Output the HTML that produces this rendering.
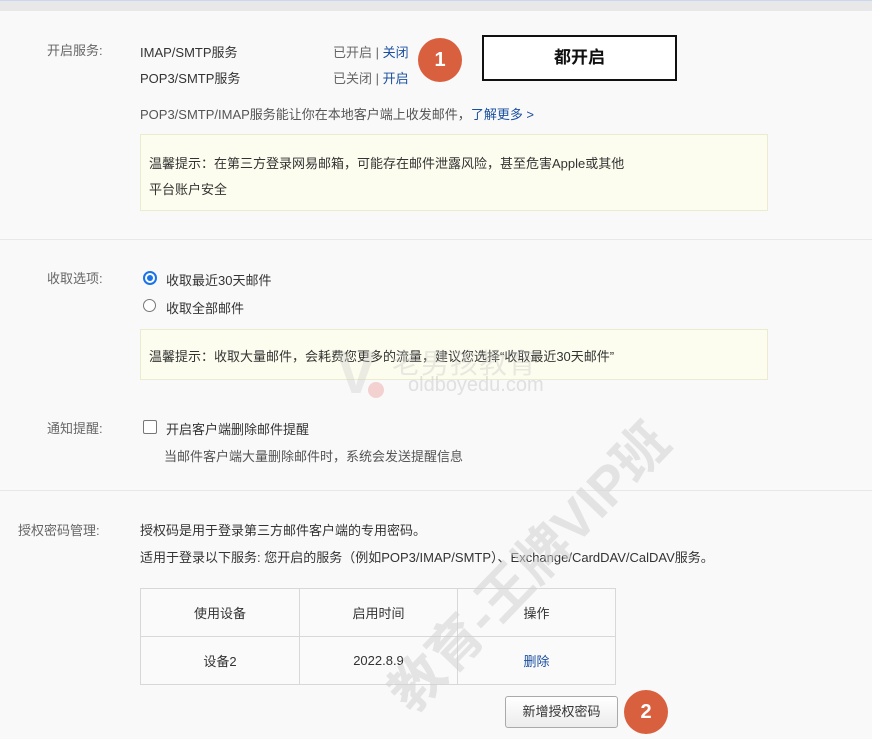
<!DOCTYPE html>
<html style="overflow:hidden;height:739px"><head><meta charset="utf-8"><style>
body{margin:0;width:872px;height:739px;background:#f9f9f9;font-family:"Liberation Sans","Noto Sans CJK SC",sans-serif;font-size:13px;color:#333;position:relative;overflow:hidden}
.a{position:absolute;white-space:nowrap}
.lbl{color:#666}
.blue{color:#1a4fa0}
.tip{position:absolute;background:#fdfdef;border:1px solid #ebebd0;left:140px;width:626px}
.hr{position:absolute;left:0;width:872px;height:1px;background:#e8e8e8}
.badge{position:absolute;width:44px;height:44px;border-radius:50%;background:#d9603f;color:#fff;font-weight:bold;font-size:20px;text-align:center;line-height:44px}
table{position:absolute;left:140px;top:588px;border-collapse:collapse;background:#fafafa}
td{border:1px solid #d8d8d8;text-align:center;height:47px;font-size:13px;padding:0}
</style></head><body>
<div class="a" style="left:0;top:0;width:872px;height:10px;background:#e8e8e8;border-top:1px solid #c9d8f0"></div>
<div class="a lbl" style="left:47px;top:40px">开启服务:</div>
<div class="a" style="left:140px;top:42px">IMAP/SMTP服务</div>
<div class="a" style="left:140px;top:68px">POP3/SMTP服务</div>
<div class="a" style="left:333px;top:42px;color:#666">已开启 | <span class="blue">关闭</span></div>
<div class="a" style="left:333px;top:68px;color:#666">已关闭 | <span class="blue">开启</span></div>
<div class="badge" style="left:418px;top:38px">1</div>
<div class="a" style="left:482px;top:35px;width:191px;height:42px;border:2px solid #111;background:#fff;text-align:center;line-height:42px;font-size:17px;font-weight:bold;color:#111">都开启</div>
<div class="a" style="left:140px;top:104px;color:#555">POP3/SMTP/IMAP服务能让你在本地客户端上收发邮件，<span class="blue">了解更多 &gt;</span></div>
<div class="tip" style="top:134px;height:75px"><div style="padding:16px 0 0 8px;line-height:26px">温馨提示：在第三方登录网易邮箱，可能存在邮件泄露风险，甚至危害Apple或其他<br>平台账户安全</div></div>
<div class="hr" style="top:239px"></div>
<div class="a lbl" style="left:47px;top:268px">收取选项:</div>
<div class="a" style="left:143px;top:271px;width:10px;height:10px;border-radius:50%;border:2px solid #1a73e8;background:#fff"><div style="width:6px;height:6px;margin:2px;border-radius:50%;background:#1a73e8"></div></div>
<div class="a" style="left:166px;top:270px">收取最近30天邮件</div>
<div class="a" style="left:143px;top:299px;width:11px;height:11px;border-radius:50%;border:1.5px solid #777;background:#fff"></div>
<div class="a" style="left:166px;top:298px">收取全部邮件</div>
<div class="tip" style="top:329px;height:49px"><div style="padding:16px 0 0 8px">温馨提示：收取大量邮件，会耗费您更多的流量，建议您选择“收取最近30天邮件”</div></div>
<div class="a" style="left:392px;top:342px;font-size:28px;color:rgba(200,200,200,0.4);letter-spacing:1px">老男孩教育</div>
<div class="a" style="left:408px;top:374px;font-size:20px;color:rgba(200,200,200,0.5)">oldboyedu.com</div>
<div class="a" style="left:336px;top:338px;font-size:60px;color:rgba(200,200,200,0.35);font-weight:bold">V</div>
<div class="a" style="left:368px;top:382px;width:16px;height:16px;border-radius:50%;background:rgba(240,170,170,0.5)"></div>
<div class="a lbl" style="left:47px;top:418px">通知提醒:</div>
<div class="a" style="left:143px;top:420px;width:12px;height:12px;border:1.5px solid #777;border-radius:2px;background:#fff"></div>
<div class="a" style="left:166px;top:419px">开启客户端删除邮件提醒</div>
<div class="a" style="left:164px;top:446px;color:#555">当邮件客户端大量删除邮件时，系统会发送提醒信息</div>
<div class="hr" style="top:490px"></div>
<div class="a lbl" style="left:18px;top:520px">授权密码管理:</div>
<div class="a" style="left:140px;top:520px">授权码是用于登录第三方邮件客户端的专用密码。</div>
<div class="a" style="left:140px;top:547px">适用于登录以下服务: 您开启的服务（例如POP3/IMAP/SMTP）、Exchange/CardDAV/CalDAV服务。</div>
<table><tr><td style="width:158px">使用设备</td><td style="width:157px">启用时间</td><td style="width:157px">操作</td></tr>
<tr><td>设备2</td><td>2022.8.9</td><td class="blue">删除</td></tr></table>
<div class="a" style="left:505px;top:696px;width:111px;height:30px;border:1px solid #aaa;border-radius:3px;background:linear-gradient(#fff,#ececec);text-align:center;line-height:30px">新增授权密码</div>
<div class="badge" style="left:624px;top:690px">2</div>
<svg style="position:absolute;left:0;top:0" width="872" height="739" viewBox="0 0 872 739">
<text x="657" y="452" text-anchor="end" transform="rotate(-46 657 430)" font-family="Liberation Sans, Noto Sans CJK SC, sans-serif" font-size="54" font-weight="bold" fill="rgba(210,210,210,0.55)">教育-王牌VIP班</text>
</svg>
</body></html>
